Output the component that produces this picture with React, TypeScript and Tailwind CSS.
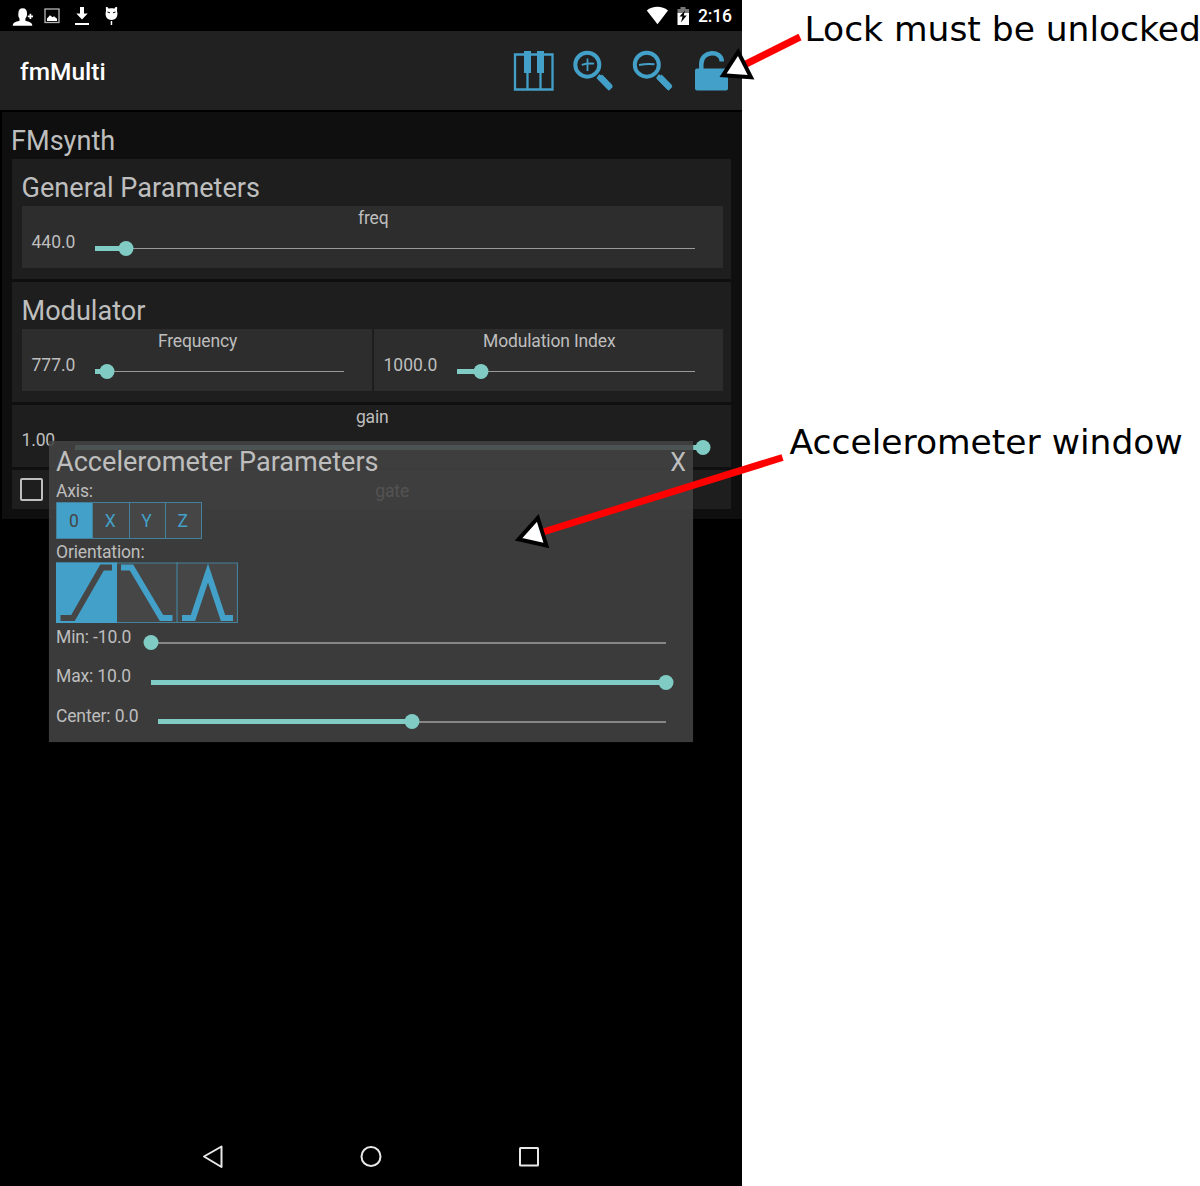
import React from "react";

type SliderProps = { value: number; thick?: boolean; className?: string };

function Slider({ value, thick, className = "" }: SliderProps) {
  return (
    <div className={`relative h-[15px] ${className}`}>
      <div className={`absolute inset-x-0 top-[7px] ${thick ? "h-[2px] bg-[#868686]" : "h-px bg-[#9a9a9a]"}`} />
      <div className="absolute left-0 top-[5px] h-[5px] bg-[#80cbc4]" style={{ width: `${value}%` }} />
      <div className="absolute top-0 size-[15px] -translate-x-1/2 rounded-full bg-[#80cbc4]" style={{ left: `${value}%` }} />
    </div>
  );
}

type ParamProps = { label: string; value: string; level: number; valueWidth: string; className?: string };

function Param({ label, value, level, valueWidth, className = "" }: ParamProps) {
  return (
    <div className={`h-[62.5px] bg-[#2d2d2d] ${className}`}>
      <div className="h-[24px] pl-[1.500px] text-center leading-[25px]">{label}</div>
      <div className="flex pl-[9.500px] pr-7">
        <span className={`shrink-0 leading-[25px] tracking-normal ${valueWidth}`}>{value}</span>
        <Slider value={level} className="mt-[11px] flex-1" />
      </div>
    </div>
  );
}

function StatusBar() {
  return (
    <div className="flex h-[31px] shrink-0 items-start bg-black text-white">
      <svg width="130" height="31" fill="currentColor">
        <path d="M12.800 25.700c0-3.200 2.500-3.800 6.700-4.900v-2.300c-1.300-1.500-1.300-3-1.100-5.500.1-3 1.400-4.800 4.300-4.800s4.200 1.800 4.300 4.800c.1 2.500-.3 4-1.600 5.500v2.300c4 1.100 6.900 1.700 6.900 4.900z" />
        <path d="M27.800 16.300h5.200M30.400 13.700v5.200" stroke="currentColor" strokeWidth="1.700" />
        <rect x="45" y="9" width="14" height="13.500" fill="none" stroke="#b5b5b5" strokeWidth="1.300" />
        <path d="M47 21v-2.500l3-3.300 2.500 2 1.500-1 3 2.500V21z" />
        <path d="M80 7h4v6.500h3.700L82 19.500l-5.700-6H80zM75 23h14v2H75z" />
        <path d="M105.800 7.500c.8-1 2.200-.3 2.900 1.200 1.800-.6 3.800-.6 5.600 0 .7-1.500 2.100-2.200 2.900-1.200l-.2 3.500c1.500 5-1 9-5.500 9s-7-4-5.500-9z" />
        <path d="M110.700 21h1.500v4h-1.500z" />
        <path d="M107.500 12l2.500.8M115.500 12l-2.500.8" stroke="#000" strokeWidth="1" />
      </svg>
      <svg className="ml-[516px]" width="45" height="31" fill="currentColor">
        <path d="M.8 10.500C6.500 5.600 16.200 5.600 22 10.500L11.500 24.300z" />
        <path d="M34.500 7h5v2h3.500v5H31.500V9h3z" fill="#777" />
        <path d="M31.500 13h11.500v12H31.500z" />
        <path d="M39 10.500l-5.500 6h3l-1.500 6 5.700-7h-3z" fill="#000" />
      </svg>
      <span className="ml-[7px] text-[17.500px] font-medium leading-[33px] tracking-[-0.2px]">2:16</span>
    </div>
  );
}

function AppBar() {
  return (
    <div className="flex h-[79px] shrink-0 items-start bg-[#212121]">
      <h1 className="w-[513px] pl-[20px] text-[24.500px] font-medium leading-[82px] tracking-normal text-white">fmMulti</h1>
      <svg className="mt-[19px]" width="228" height="44" viewBox="513 50 228 44" fill="none" stroke="#43a0c8">
        <path d="M515 54.500h37.500v35H515zM527.500 70v19M540.500 70v19" strokeWidth="2.300" />
        <path d="M524 51h7v22h-7zM537 51h7v22h-7z" fill="#43a0c8" stroke="none" />
        <circle cx="587.300" cy="64.700" r="12" strokeWidth="4" />
        <path d="M581.800 64.900q5-1.800 12.300-1.300M587.500 58.500v12.500" strokeWidth="1.800" />
        <path d="M599.800 76.800L610.300 87.500" strokeWidth="6.500" />
        <path d="M599.600 75L612 86.800l-3 3L597.500 78z" fill="#43a0c8" strokeWidth="1.500" strokeLinejoin="round" />
        <circle cx="646.800" cy="64.700" r="12" strokeWidth="4" />
        <path d="M639 65q8-1.500 15.500-.7" strokeWidth="2" />
        <path d="M659.300 76.800L669.800 87.500" strokeWidth="6.500" />
        <path d="M659.100 75L671.500 86.800l-3 3L657 78z" fill="#43a0c8" strokeWidth="1.500" strokeLinejoin="round" />
        <path d="M701.300 70v-6c0-14 20.500-14 20.500-2.500" strokeWidth="4.500" />
        <rect x="695" y="68.500" width="33" height="22" rx="2" fill="#43a0c8" stroke="none" />
      </svg>
    </div>
  );
}

function AxisButton({ label, active }: { label: string; active?: boolean }) {
  return (
    <div className={`h-full w-[36.500px] border-r border-[#43819c] pr-[1.500px] text-center leading-[37px] ${active ? "bg-[#43a0c8] text-[#454545]" : "text-[#43a0c8]"}`}>
      {label}
    </div>
  );
}

function DialogSlider({ label, value, labelWidth }: { label: string; value: number; labelWidth: string }) {
  return (
    <div className="flex h-[39.500px] pr-[27px]">
      <span className={`shrink-0 leading-[28px] ${labelWidth}`}>{label}</span>
      <Slider thick value={value} className="mt-[12.500px] flex-1" />
    </div>
  );
}

function AccelerometerDialog() {
  return (
    <div className="absolute left-[49px] top-[441px] h-[301px] w-[644px] bg-[#434343]/88 pl-[7px] shadow-[0_0_1px_#222]">
      <div className="flex h-[38px] justify-between pr-[7px] text-[27.100px] leading-[43px] tracking-normal">
        <span>Accelerometer Parameters</span>
        <span className="text-[25px]">X</span>
      </div>
      <div className="h-[23px] leading-[24px]">Axis:</div>
      <div className="flex h-[37px] w-[146px] border border-r-0 border-[#43819c] bg-[#464646]">
        <AxisButton label="0" active />
        <AxisButton label="X" />
        <AxisButton label="Y" />
        <AxisButton label="Z" />
      </div>
      <div className="h-[22.500px] leading-[26px]">Orientation:</div>
      <svg width="182" height="61" fill="none" stroke="#43a0c8" strokeWidth="6">
        <path d="M.5 1h181v59.500H.5zM121 0v61" fill="#464646" stroke="#43819c" strokeWidth="1.200" />
        <path d="M0 .5h61v60.500H0z" fill="#43a0c8" stroke="none" />
        <path d="M4.500 56h12.500L46 5.500h10" stroke="#464646" />
        <path d="M65 5.500h10.500L105.500 56h11" />
        <path d="M126 56h11L152 11L167 56h10" />
      </svg>
      <DialogSlider label="Min: -10.0" value={0} labelWidth="w-[95.400px]" />
      <DialogSlider label="Max: 10.0" value={100} labelWidth="w-[95.400px]" />
      <DialogSlider label="Center: 0.0" value={50} labelWidth="w-[102.400px]" />
    </div>
  );
}

function NavBar() {
  return (
    <svg className="mt-auto shrink-0" width="741" height="60" fill="none" stroke="#e8e8e8" strokeWidth="2">
      <path d="M221.500 20.500v20.500L204 30.500z" strokeLinejoin="round" />
      <circle cx="371" cy="30.500" r="9.500" />
      <rect x="520" y="22" width="18" height="17.500" rx=".5" />
    </svg>
  );
}

export default function App() {
  return (
    <div className="relative flex h-[1186px] w-[1200px] overflow-hidden bg-white font-['Roboto',sans-serif]">
      <main className="relative flex w-[741.500px] shrink-0 flex-col bg-black text-[17.500px] tracking-[-0.150px] text-[#bebebe]">
        <StatusBar />
        <AppBar />
        <section className="ml-[1.500px] mt-[1.500px] h-[407.500px] bg-[#0f0f0f] pl-[10.500px] pr-[10.500px]">
          <h2 className="-ml-px h-[47px] text-[27.100px] leading-[58px] tracking-normal">FMsynth</h2>
          <div className="h-[120.500px] bg-[#1e1e1e] pl-[10px] pr-2">
            <h3 className="-ml-[.5px] h-[47px] text-[27.100px] leading-[58px] tracking-normal">General Parameters</h3>
            <Param label="freq" value="440.0" level={5.2} valueWidth="w-[63.500px]" />
          </div>
          <div className="mt-[2.500px] h-[120.500px] bg-[#1e1e1e] pl-[10px] pr-2">
            <h3 className="-ml-[.5px] h-[47px] text-[27.100px] leading-[58px] tracking-normal">Modulator</h3>
            <div className="flex gap-[2.500px]">
              <Param label="Frequency" value="777.0" level={4.9} valueWidth="w-[63.500px]" className="w-[349.500px]" />
              <Param label="Modulation Index" value="1000.0" level={10} valueWidth="w-[73.500px]" className="flex-1" />
            </div>
          </div>
          <div className="mt-[2.500px] h-[62.500px] bg-[#1e1e1e] pl-[9.500px] pr-7">
            <div className="-mr-5 h-[23px] text-center leading-[25px]">gain</div>
            <div className="flex">
              <span className="w-[53.500px] shrink-0 leading-[25px]">1.00</span>
              <Slider value={100} className="mt-[12px] flex-1" />
            </div>
          </div>
          <div className="mt-[2.500px] flex h-[39.500px] items-center bg-[#1e1e1e] pl-[8.300px]">
            <div className="size-[23px] rounded-[2px] border-2 border-[#bebebe]" />
            <span className="flex-1 pl-[10px] pt-[3px] text-center">gate</span>
          </div>
        </section>
        <NavBar />
        <AccelerometerDialog />
      </main>
      <aside className="flex-1 whitespace-nowrap font-['DejaVu_Sans',sans-serif] text-[34.500px] leading-[40px] text-black">
        <p className="ml-[63px] mt-[8.500px] tracking-[-0.030px]">Lock must be unlocked</p>
        <p className="ml-[48px] mt-[373.500px]">Accelerometer window</p>
      </aside>
      <svg className="pointer-events-none absolute inset-0" width="1200" height="1186">
        <path d="M800 37L744 65M782.500 457.500L543 532" stroke="#f00" strokeWidth="7" />
        <path d="M723 75.300L738.200 52L751 77.200zM518.500 539.300L537.800 518L546.400 545.500z" fill="#fff" stroke="#000" strokeWidth="4" />
      </svg>
    </div>
  );
}
